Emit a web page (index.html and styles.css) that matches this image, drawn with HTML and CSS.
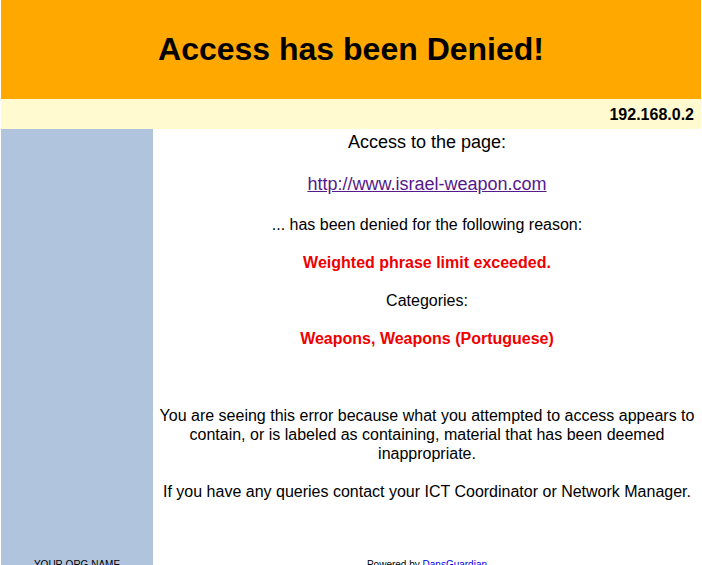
FILE: index.html
```html
<!DOCTYPE html>
<html lang="en">
<head>
    <meta charset="UTF-8">
    <title>DansGuardian - Access Denied</title>
    <link rel="stylesheet" href="styles.css">
</head>
<body>
    <div id="page">
        <div id="header">Access has been Denied!</div>
        <div id="ip-bar">192.168.0.2</div>

        <div id="body-row">
            <div id="sidebar">
                <div class="org-name">YOUR ORG NAME</div>
            </div>

            <div id="content">
                <p class="big">Access to the page:</p>
                <p class="big url"><a href="http://www.israel-weapon.com">http://www.israel-weapon.com</a></p>
                <p>... has been denied for the following reason:</p>
                <p class="reason">Weighted phrase limit exceeded.</p>
                <p>Categories:</p>
                <p class="reason">Weapons, Weapons (Portuguese)</p>

                <p class="explain">You are seeing this error because what you attempted to access appears to contain, or is labeled as containing, material that has been deemed inappropriate.</p>
                <p>If you have any queries contact your ICT Coordinator or Network Manager.</p>

                <div class="powered">Powered by <a href="http://dansguardian.org">DansGuardian</a></div>
            </div>
        </div>
    </div>
</body>
</html>
```

FILE: styles.css
```css
body {
    font-family: 'Liberation Sans', Arial, sans-serif;
    margin: 0;
    padding: 0 1px;
    background-color: #fff;
    color: #000;
}

#header {
    background-color: #ffa800;
    height: 99px;
    display: flex;
    align-items: center;
    justify-content: center;
    font-size: 32px;
    font-weight: bold;
}

#ip-bar {
    background-color: #fffad0;
    height: 30px;
    line-height: 31px;
    text-align: right;
    padding-right: 7px;
    font-size: 16px;
    font-weight: bold;
}

#body-row {
    display: flex;
}

#sidebar {
    width: 152px;
    flex-shrink: 0;
    background-color: #b0c4de;
    display: flex;
    flex-direction: column;
    justify-content: flex-end;
}

.org-name {
    font-size: 10px;
    line-height: 12px;
    text-align: center;
    padding-bottom: 4px;
}

#content {
    flex: 1;
    text-align: center;
    padding: 2px 2px 0;
}

#content p {
    margin: 0 0 19px;
    font-size: 16px;
    line-height: 19px;
}

#content p.big {
    font-size: 18px;
    line-height: 22px;
    margin-bottom: 20px;
}

.url a {
    color: #551a8b;
}

#content p.reason {
    color: #f00000;
    font-weight: bold;
}

#content p.explain {
    margin-top: 58px;
}

.powered {
    font-size: 10px;
    line-height: 12px;
    margin-top: 58px;
    padding-bottom: 4px;
}

.powered a {
    color: #0000ee;
    text-decoration: none;
}
```
